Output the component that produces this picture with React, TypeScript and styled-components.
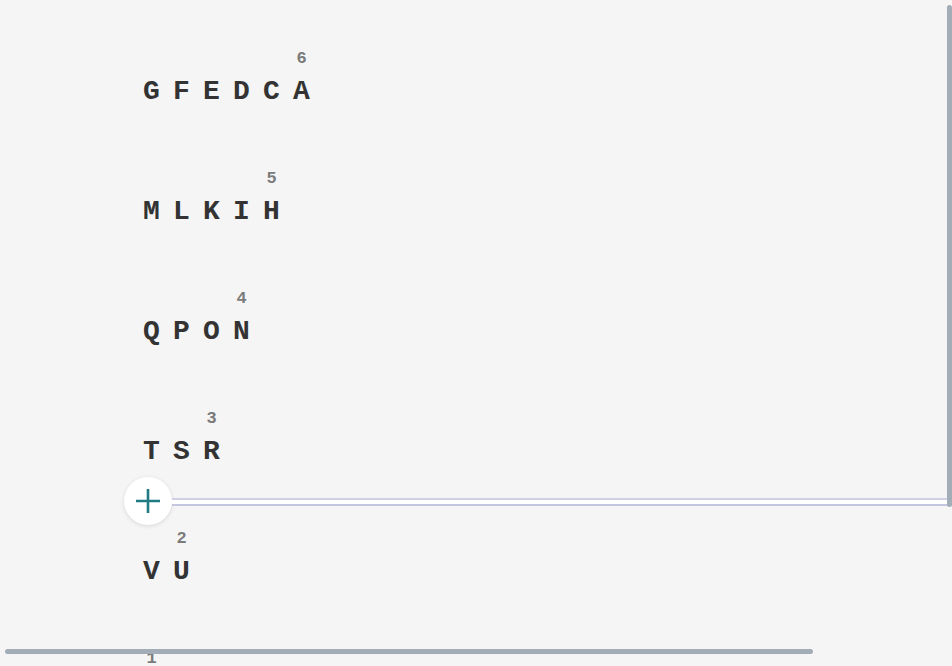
import styled, { createGlobalStyle } from "styled-components";

const GlobalStyle = createGlobalStyle`
  html, body {
    margin: 0;
    padding: 0;
    background: #f5f5f5;
    overflow: hidden;
  }
`;

const rows = [
  { letters: ["G", "F", "E", "D", "C", "A"], count: 6 },
  { letters: ["M", "L", "K", "I", "H"], count: 5 },
  { letters: ["Q", "P", "O", "N"], count: 4 },
  { letters: ["T", "S", "R"], count: 3 },
  { letters: ["V", "U"], count: 2 },
  { letters: ["W"], count: 1 },
];

export default function App() {
  return (
    <>
      <GlobalStyle />
      <Viewport>
        <Board>
          {rows.map((row) => (
            <Row key={row.count}>
              {row.letters.map((letter, i) => (
                <Letter key={letter}>
                  {letter}
                  {i === row.letters.length - 1 && <Count>{row.count}</Count>}
                </Letter>
              ))}
            </Row>
          ))}
        </Board>

        {/* drop indicator shown over the list while dragging */}
        <DropIndicator>
          <AddButton aria-label="Add">
            <svg width="26" height="26" viewBox="0 0 26 26">
              <path d="M13 1v24M1 13h24" stroke="#207b84" strokeWidth="2.6" fill="none" />
            </svg>
          </AddButton>
          <DropLine />
        </DropIndicator>

        <VScroll />
        <HScroll />
      </Viewport>
    </>
  );
}

const Viewport = styled.div`
  position: relative;
  width: 100vw;
  height: 100vh;
  overflow: hidden;
  background: #f5f5f5;
`;

const Board = styled.div`
  display: flex;
  flex-direction: column;
  padding: 32px 0 0 143px;
`;

const Row = styled.div`
  display: flex;
  align-items: center;
  height: 120px;
`;

const Letter = styled.span`
  position: relative;
  width: 30px;
  font-family: "Liberation Mono", "DejaVu Sans Mono", monospace;
  font-weight: 700;
  font-size: 28px;
  line-height: 30px;
  color: #333333;
`;

const Count = styled.span`
  position: absolute;
  left: 0;
  width: 17px;
  top: -27px;
  text-align: center;
  font-family: "Liberation Mono", "DejaVu Sans Mono", monospace;
  font-weight: 700;
  font-size: 17px;
  line-height: 18px;
  color: #7b7b7b;
`;

const DropIndicator = styled.div`
  position: absolute;
  left: 124px;
  right: 0;
  top: 477px;
  display: flex;
  align-items: center;
`;

const AddButton = styled.button`
  flex: none;
  width: 48px;
  height: 48px;
  padding: 0;
  border: none;
  border-radius: 50%;
  background: #ffffff;
  box-shadow: 0 1px 4px rgba(0, 0, 0, 0.12);
  display: flex;
  align-items: center;
  justify-content: center;
`;

const DropLine = styled.div`
  flex: 1;
  height: 4px;
  margin-top: 2px;
  background: #ffffff;
  border-top: 2px solid #cfd0e6;
  border-bottom: 2px solid #c5c6df;
`;

const VScroll = styled.div`
  position: absolute;
  right: 0;
  top: 5px;
  width: 5px;
  height: 502px;
  border-radius: 3px;
  background: #a3adb7;
`;

const HScroll = styled.div`
  position: absolute;
  left: 5px;
  top: 649px;
  width: 808px;
  height: 5px;
  border-radius: 3px;
  background: #a3adb7;
`;
